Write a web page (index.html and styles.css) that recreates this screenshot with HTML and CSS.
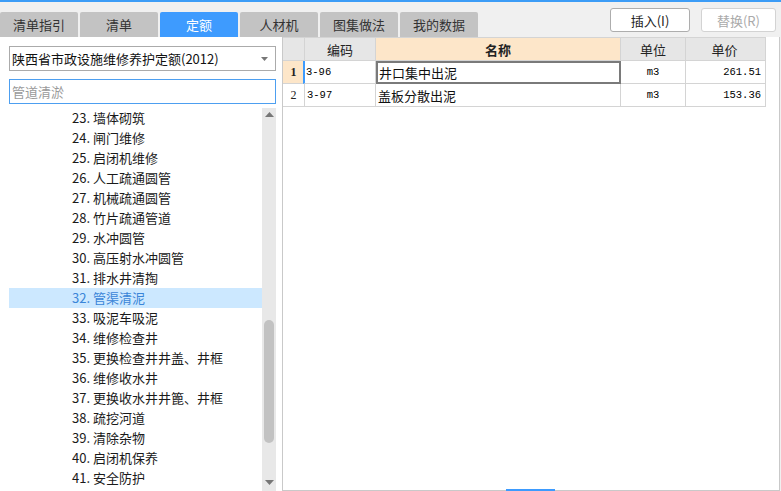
FILE: index.html
```html
<!DOCTYPE html>
<html>
<head>
<meta charset="utf-8">
<link rel="stylesheet" href="styles.css">
</head>
<body>
<div class="app">
  <div class="topline"></div>
  <div class="header">
    <div class="tabs">
      <div class="tab">清单指引</div>
      <div class="tab">清单</div>
      <div class="tab active">定额</div>
      <div class="tab">人材机</div>
      <div class="tab">图集做法</div>
      <div class="tab">我的数据</div>
    </div>
    <div class="actions">
      <button class="btn">插入(I)</button>
      <button class="btn disabled">替换(R)</button>
    </div>
  </div>
  <div class="main">
    <div class="left">
      <div class="select">
        <span>陕西省市政设施维修养护定额(2012)</span>
        <svg class="caret" width="7" height="4" viewBox="0 0 7 4"><path d="M0 0H7L3.5 4Z" fill="#777"/></svg>
      </div>
      <div class="search">管道清淤</div>
      <div class="listwrap">
        <ul class="list">
          <li>23. 墙体砌筑</li>
          <li>24. 闸门维修</li>
          <li>25. 启闭机维修</li>
          <li>26. 人工疏通圆管</li>
          <li>27. 机械疏通圆管</li>
          <li>28. 竹片疏通管道</li>
          <li>29. 水冲圆管</li>
          <li>30. 高压射水冲圆管</li>
          <li>31. 排水井清掏</li>
          <li class="sel">32. 管渠清泥</li>
          <li>33. 吸泥车吸泥</li>
          <li>34. 维修检查井</li>
          <li>35. 更换检查井井盖、井框</li>
          <li>36. 维修收水井</li>
          <li>37. 更换收水井井篦、井框</li>
          <li>38. 疏挖河道</li>
          <li>39. 清除杂物</li>
          <li>40. 启闭机保养</li>
          <li>41. 安全防护</li>
        </ul>
        <div class="scrollbar">
          <svg class="arrow up" width="9" height="5" viewBox="0 0 9 5"><path d="M0 5H9L4.5 0Z" fill="#777"/></svg>
          <div class="thumb"></div>
          <svg class="arrow down" width="9" height="5" viewBox="0 0 9 5"><path d="M0 0H9L4.5 5Z" fill="#777"/></svg>
        </div>
      </div>
    </div>
    <div class="right">
      <div class="grid">
        <div class="row head">
          <div class="c num"></div>
          <div class="c code">编码</div>
          <div class="c name hl">名称</div>
          <div class="c unit">单位</div>
          <div class="c price">单价</div>
        </div>
        <div class="row">
          <div class="c num cur">1</div>
          <div class="c code mono curcode">3-96</div>
          <div class="c name focus">井口集中出泥</div>
          <div class="c unit mono">m3</div>
          <div class="c price mono">261.51</div>
        </div>
        <div class="row">
          <div class="c num">2</div>
          <div class="c code mono">3-97</div>
          <div class="c name">盖板分散出泥</div>
          <div class="c unit mono">m3</div>
          <div class="c price mono">153.36</div>
        </div>
      </div>
      <div class="bottommark"></div>
    </div>
  </div>
</div>
</body>
</html>
```
FILE: styles.css
```css
* { box-sizing: border-box; }
html, body { margin: 0; padding: 0; }
body {
  width: 781px;
  height: 491px;
  overflow: hidden;
  background: #f0f0f0;
  font-family: "Noto Sans CJK SC", "Noto Sans", sans-serif;
  font-size: 13px;
  color: #222;
}
.app { display: flex; flex-direction: column; height: 491px; }
.topline { height: 2px; background: #3c9cf6; }
.header {
  height: 35px;
  display: flex;
  align-items: flex-end;
}
.tabs { display: flex; gap: 2px; padding-bottom: 0; }
.tab {
  width: 78px;
  height: 25px;
  background: #c3c3c3;
  border-radius: 2px 2px 0 0;
  display: flex;
  align-items: center;
  justify-content: center;
  font-size: 13px;
  color: #333;
  line-height: 1;
}
.tab.active { background: #3e9bfe; color: #fff; }
.actions {
  margin-left: auto;
  align-self: flex-start;
  margin-top: 6px;
  display: flex;
  gap: 11px;
  padding-right: 5px;
}
.btn {
  width: 80px;
  height: 24px;
  background: #fff;
  border: 1px solid #adadad;
  border-radius: 3px;
  font-family: "Noto Sans CJK SC", "Noto Sans", sans-serif;
  font-size: 13px;
  color: #222;
  padding: 0;
}
.btn.disabled { width: 75px; border-color: #d3d3d3; color: #aaa; }
.main { flex: 1; display: flex; min-height: 0; }
.left {
  width: 282px;
  background: #fff;
  padding: 9px 0 0 9px;
  display: flex;
  flex-direction: column;
}
.select {
  width: 267px;
  height: 25px;
  border: 1px solid #ababab;
  display: flex;
  align-items: center;
  justify-content: space-between;
  padding: 0 7px 0 2px;
  font-size: 13px;
  color: #111;
}
.search {
  margin-top: 8px;
  width: 267px;
  height: 25px;
  border: 1px solid #4d9ff0;
  display: flex;
  align-items: center;
  padding-left: 2px;
  color: #9a9a9a;
  font-size: 13px;
}
.listwrap {
  margin-top: 4px;
  flex: 1;
  display: flex;
  min-height: 0;
  width: 267px;
}
.list {
  list-style: none;
  margin: 0;
  padding: 0;
  flex: 1;
  overflow: hidden;
}
.list li {
  height: 20px;
  line-height: 20px;
  padding-left: 63px;
  white-space: nowrap;
  color: #1a1a1a;
}
.list li.sel { background: #cce8ff; color: #3a85d8; }
.scrollbar {
  width: 14px;
  background: #e8e8e8;
  display: flex;
  flex-direction: column;
  align-items: center;
}
.arrow.up { margin-top: 4px; }
.thumb {
  margin-top: 203px;
  width: 10px;
  height: 123px;
  border-radius: 5px;
  background: #c2c2c2;
}
.arrow.down { margin-top: 37px; }
.right {
  flex: 1;
  background: #fff;
  border-left: 1px solid #c9c9c9;
  border-right: 1px solid #c9c9c9;
  border-bottom: 1px solid #c9c9c9;
  margin-right: 1px;
  position: relative;
}
.grid { display: flex; flex-direction: column; width: 483px; }
.row { display: flex; height: 23px; }
.row .c {
  border-right: 1px solid #d4d4d4;
  border-bottom: 1px solid #d4d4d4;
  display: flex;
  align-items: center;
  padding: 0 2px;
  white-space: nowrap;
}
.row.head { height: 24px; border-top: 1px solid #d4d4d4; }
.row.head .c { background: #e6e6e6; justify-content: center; font-size: 13px; color: #222; }
.row.head .c.hl { background: #fde6c9; font-weight: bold; }
.c.num { width: 22px; justify-content: center; font-family: "Liberation Serif", serif; font-size: 12px; }
.c.num.cur { background: #fde6c9; font-weight: bold; }
.c.code { width: 71px; }
.c.code.curcode { border-left: 2px solid #3d9bfe; margin-left: -2px; width: 73px; padding-left: 1px; }
.c.name { width: 245px; font-size: 13px; color: #111; }
.c.name.focus { border: 2px solid #7a7a7a; padding-left: 1px; }
.c.unit { width: 65px; justify-content: center; }
.c.price { width: 80px; justify-content: flex-end; padding-right: 4px; }
.mono { font-family: "Liberation Mono", "DejaVu Sans Mono", monospace; font-size: 10.5px; color: #000; }
.bottommark {
  position: absolute;
  left: 223px;
  bottom: -1px;
  width: 49px;
  height: 2px;
  background: #3d9bfe;
}
```
